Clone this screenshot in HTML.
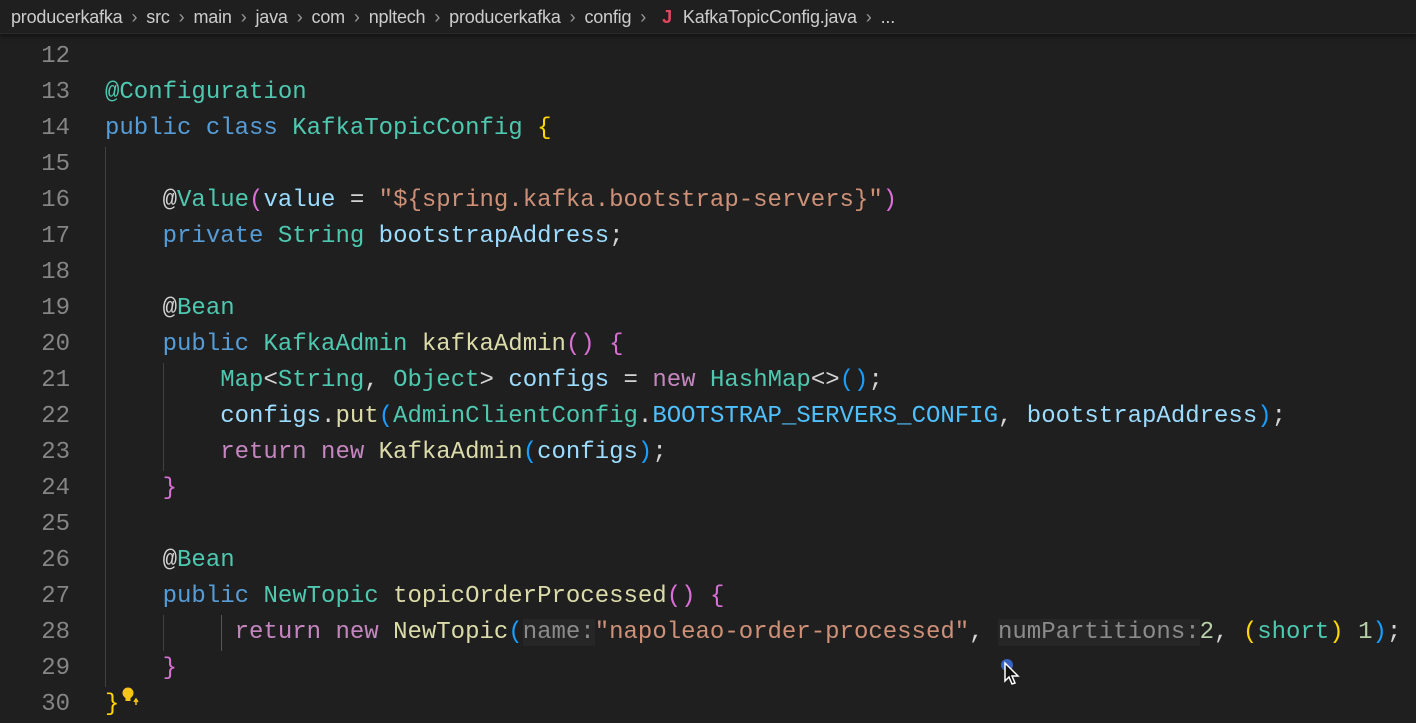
<!DOCTYPE html>
<html><head><meta charset="utf-8"><style>
body{margin:0;width:1416px;height:723px;background:#1f1f1f;overflow:hidden;position:relative}
.bc{position:absolute;left:0;top:0;width:1416px;height:34px;background:#1f1f1f;border-bottom:1px solid #2a2a2a;box-shadow:0 3px 4px rgba(0,0,0,.35);font:18px "Liberation Sans",sans-serif;color:#cccccc;line-height:34px;padding-left:11px;box-sizing:border-box;white-space:nowrap;z-index:2;letter-spacing:-0.2px}
.bc .s{color:#999;margin:0 9px}
.bc .j{color:#e0485e;font-weight:bold;margin:0 11px 0 7px}
.ln{position:absolute;left:0;width:70px;text-align:right;color:#858585;font:24px "Liberation Mono",monospace}
.cd{position:absolute;left:105px;white-space:pre;font:24px "Liberation Mono",monospace;color:#d4d4d4}
.g{position:absolute;width:1px;background:#404040}
.k{color:#569cd6}.t{color:#4ec9b0}.f{color:#dcdcaa}.v{color:#9cdcfe}.s2{color:#ce9178}.c{color:#4fc1ff}
.p{color:#c586c0}.y{color:#ffd700}.m{color:#da70d6}.b{color:#179fff}.n{color:#b5cea8}
.h{color:#8b8b8b;background:#262626}
</style></head><body>
<div class="bc">producerkafka<span class="s">›</span>src<span class="s">›</span>main<span class="s">›</span>java<span class="s">›</span>com<span class="s">›</span>npltech<span class="s">›</span>producerkafka<span class="s">›</span>config<span class="s">›</span><span class="j">J</span>KafkaTopicConfig.java<span class="s">›</span>...</div>

<div class="g" style="left:105px;top:147px;height:540px"></div>
<div class="g" style="left:163px;top:363px;height:108px"></div>
<div class="g" style="left:163px;top:615px;height:36px"></div>
<div class="g" style="left:221px;top:615px;height:36px;background:#555"></div>

<div class="ln" style="top:39px;line-height:36px">12<br>13<br>14<br>15<br>16<br>17<br>18<br>19<br>20<br>21<br>22<br>23<br>24<br>25<br>26<br>27<br>28<br>29<br>30</div>
<div class="cd" style="top:39px;line-height:36px">
<span class="t">@Configuration</span>
<span class="k">public class</span> <span class="t">KafkaTopicConfig</span> <span class="y">{</span>

    @<span class="t">Value</span><span class="m">(</span><span class="v">value</span> = <span class="s2">"${spring.kafka.bootstrap-servers}"</span><span class="m">)</span>
    <span class="k">private</span> <span class="t">String</span> <span class="v">bootstrapAddress</span>;

    @<span class="t">Bean</span>
    <span class="k">public</span> <span class="t">KafkaAdmin</span> <span class="f">kafkaAdmin</span><span class="m">()</span> <span class="m">{</span>
        <span class="t">Map</span>&lt;<span class="t">String</span>, <span class="t">Object</span>&gt; <span class="v">configs</span> = <span class="p">new</span> <span class="t">HashMap</span>&lt;&gt;<span class="b">()</span>;
        <span class="v">configs</span>.<span class="f">put</span><span class="b">(</span><span class="t">AdminClientConfig</span>.<span class="c">BOOTSTRAP_SERVERS_CONFIG</span>, <span class="v">bootstrapAddress</span><span class="b">)</span>;
        <span class="p">return new</span> <span class="f">KafkaAdmin</span><span class="b">(</span><span class="v">configs</span><span class="b">)</span>;
    <span class="m">}</span>

    @<span class="t">Bean</span>
    <span class="k">public</span> <span class="t">NewTopic</span> <span class="f">topicOrderProcessed</span><span class="m">()</span> <span class="m">{</span>
 <span class="p">        return new</span> <span class="f">NewTopic</span><span class="b">(</span><span class="h">name:</span><span class="s2">"napoleao-order-processed"</span>, <span class="h">numPartitions:</span><span class="n">2</span>, <span class="y">(</span><span class="t">short</span><span class="y">)</span> <span class="n">1</span><span class="b">)</span>;
    <span class="m">}</span>
<span class="y">}</span></div>
<svg style="position:absolute;left:120px;top:686px" width="22" height="22" viewBox="0 0 22 22"><circle cx="8" cy="7" r="5.5" fill="#f5c518"/><rect x="5.5" y="11" width="5" height="4" fill="#f5c518"/><path d="M14 16 L16 13 L18 16 M16 13 V19" stroke="#f5c518" stroke-width="1.5" fill="none"/></svg>
<svg style="position:absolute;left:998px;top:655px" width="26" height="32" viewBox="0 0 26 32"><circle cx="9" cy="10" r="6" fill="#3a6fe0" opacity=".85"/><path d="M7 8 L7 26 L11 22 L14 29 L17 28 L14 21 L20 21 Z" fill="#111" stroke="#fff" stroke-width="1.5"/></svg>
</body></html>
